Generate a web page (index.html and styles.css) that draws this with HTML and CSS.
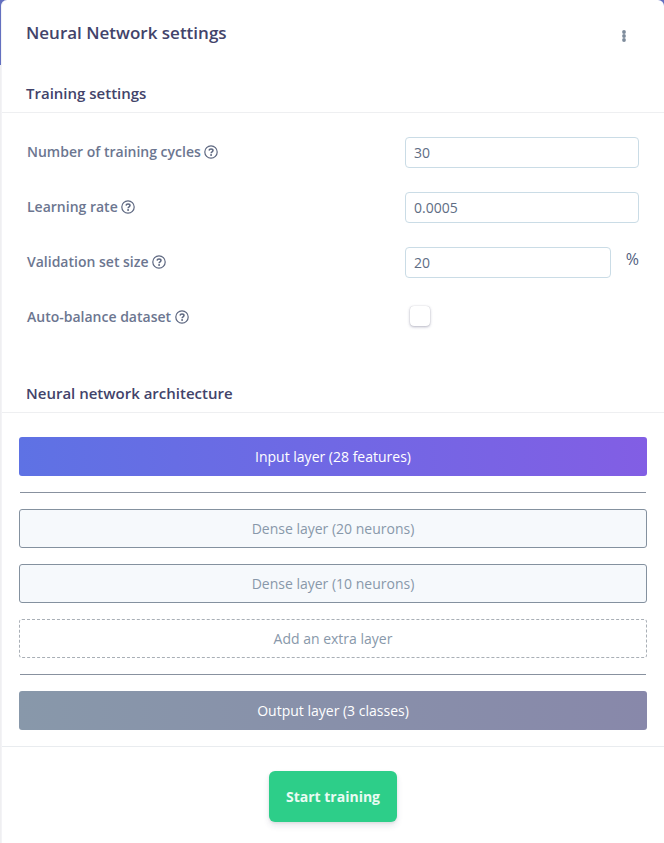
FILE: index.html
```html
<!DOCTYPE html>
<html lang="en">
<head>
<meta charset="utf-8">
<title>Neural Network settings</title>
<link rel="stylesheet" href="styles.css">
</head>
<body>

<!-- question mark icon, shared by all the labels -->
<svg class="sprite" aria-hidden="true">
	<symbol id="icon-help" viewBox="0 0 14 14">
		<circle cx="7" cy="7" r="6.2" fill="none" stroke="currentColor" stroke-width="1.2"/>
		<path d="M5 5.500C5.200 4.400 5.900 3.900 7 3.900c1.200 0 2 .7 2 1.600 0 1.400-1.900 1.300-1.900 2.700" fill="none" stroke="currentColor" stroke-width="1.500"/>
		<circle cx="7.100" cy="10" r=".95" fill="currentColor"/>
	</symbol>
</svg>

<form class="card">
	<header class="card-header">
		<h1>Neural Network settings</h1>
		<button type="button" class="menu" aria-label="Options">
			<svg width="6" height="14" viewBox="0 0 6 14">
				<circle cx="3" cy="3" r="1.900"/>
				<circle cx="3" cy="7" r="1.900"/>
				<circle cx="3" cy="11" r="1.900"/>
			</svg>
		</button>
	</header>

	<h2>Training settings</h2>
	<div class="settings">
		<div class="row">
			<label for="cycles">Number of training cycles <svg class="help"><use href="#icon-help"/></svg></label>
			<div class="field"><input type="text" id="cycles" value="30"></div>
		</div>
		<div class="row">
			<label for="rate">Learning rate <svg class="help"><use href="#icon-help"/></svg></label>
			<div class="field"><input type="text" id="rate" value="0.0005"></div>
		</div>
		<div class="row">
			<label for="validation">Validation set size <svg class="help"><use href="#icon-help"/></svg></label>
			<div class="field"><input type="text" id="validation" value="20"><span class="unit">%</span></div>
		</div>
		<div class="row">
			<label for="balance">Auto-balance dataset <svg class="help"><use href="#icon-help"/></svg></label>
			<div class="field"><input type="checkbox" id="balance"></div>
		</div>
	</div>

	<h2>Neural network architecture</h2>
	<div class="layers">
		<div class="layer layer-input">Input layer (28 features)</div>
		<hr>
		<button type="button" class="layer layer-dense">Dense layer (20 neurons)</button>
		<button type="button" class="layer layer-dense">Dense layer (10 neurons)</button>
		<button type="button" class="layer layer-add">Add an extra layer</button>
		<hr>
		<div class="layer layer-output">Output layer (3 classes)</div>
	</div>

	<footer class="card-footer">
		<button type="submit" class="btn-train">Start training</button>
	</footer>
</form>

</body>
</html>
```
FILE: styles.css
```css
* {
	box-sizing: border-box;
}
body {
	margin: 0;
	padding-left: 1px;
	min-height: 100vh;
	display: flex;
	background: linear-gradient(#6370c0, #6370c0) no-repeat 0 0 / 100% 65px #efeff1;
	font-family: "Open Sans", sans-serif;
	font-size: 14px;
	line-height: 20px;
	color: #525f7f;
}
h1, h2 {
	margin: 0;
	font-weight: 600;
	color: #42436a;
}
h1 {
	font-size: 17px;
}
h2 {
	padding: 25px 24px 9px;
	border-bottom: 1px solid #eeeff1;
	font-size: 15px;
}
input, button {
	font: inherit;
}
.sprite {
	display: none;
}
.card {
	flex: 1;
	border-left: 1px solid #f3f3f6;
	border-radius: 6px 6px 0 0;
	background: #fff;
}
.card-header {
	display: flex;
	justify-content: space-between;
	align-items: center;
	height: 58px;
	padding: 8px 31px 0 24px;
}
.menu {
	display: flex;
	padding: 6px 6px 0;
	border: 0;
	background: none;
	fill: #7d8b9b;
	cursor: pointer;
}

/* training settings */
.settings {
	display: grid;
	gap: 24px;
	padding: 24px 25px 25px;
}
.row {
	display: grid;
	grid-template-columns: 378fr 234fr;
	height: 31px;
}
.row label {
	padding-top: 5px;
	font-weight: 600;
	color: #6c7690;
}
.help {
	width: 14px;
	height: 14px;
	vertical-align: -2px;
	color: #5d6780;
}
.field {
	display: flex;
	align-items: center;
}
.field input[type="text"] {
	flex: 1;
	min-width: 0;
	height: 31px;
	padding: 0 8px;
	border: 1px solid #cadce6;
	border-radius: 4px;
	background: #fff;
	color: #606d84;
}
.field input[type="checkbox"] {
	appearance: none;
	width: 20px;
	height: 20px;
	margin: 0 5px 3px;
	border-radius: 4px;
	background: #fff;
	box-shadow: 0 1px 3px rgba(50, 50, 93, .35), 0 0 1px rgba(0, 0, 0, .2);
}
.unit {
	padding: 0 0 7px 15px;
	font-size: 16px;
}

/* network layers */
.layers {
	display: flex;
	flex-direction: column;
	gap: 16px;
	padding: 24px 17px 16px;
}
.layers hr {
	width: calc(100% - 2px);
	margin: 0 1px;
	border: 0;
	border-top: 1px solid #88919f;
}
.layer {
	height: 39px;
	padding: 9px;
	border: 1px solid #84919f;
	border-radius: 3px;
	text-align: center;
	color: #8898aa;
}
.layer-input,
.layer-output {
	padding: 10px;
	border: 0;
	color: #fff;
}
.layer-input {
	background: linear-gradient(87deg, #5e72e4, #825ee4);
}
.layer-output {
	background: linear-gradient(87deg, #8898aa, #8888aa);
}
.layer-dense {
	background: #f6f9fc;
}
.layer-add {
	border: 1px dashed #a9afb6;
	background: #fff;
}

.card-footer {
	padding: 24px;
	border-top: 1px solid #e9ecef;
	text-align: center;
}
.btn-train {
	height: 51px;
	padding: 0 17px;
	border: 0;
	border-radius: 6px;
	background: #2dce89;
	box-shadow: 0 4px 6px rgba(50, 50, 93, .11), 0 1px 3px rgba(0, 0, 0, .08);
	font-weight: 700;
	color: #e9fbf3;
	cursor: pointer;
}
```
